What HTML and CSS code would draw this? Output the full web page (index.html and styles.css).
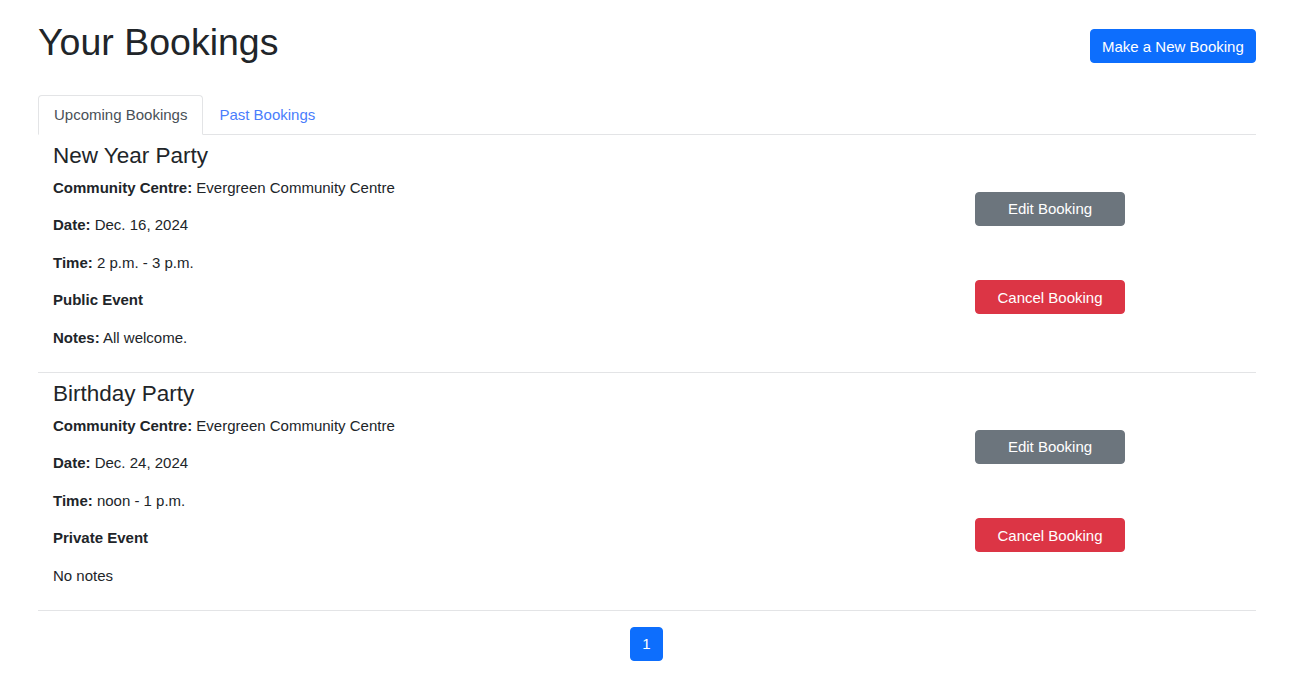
FILE: index.html
```html
<!DOCTYPE html>
<html lang="en">
<head>
<meta charset="utf-8">
<title>Your Bookings</title>
<link rel="stylesheet" href="styles.css">
</head>
<body>
<div class="page">
  <header class="page-header">
    <h1 class="page-title">Your Bookings</h1>
    <a class="btn btn-primary" href="#">Make a New Booking</a>
  </header>

  <ul class="tabs">
    <li class="tab-item"><a class="tab-link active" href="#">Upcoming Bookings</a></li>
    <li class="tab-item"><a class="tab-link" href="#">Past Bookings</a></li>
  </ul>

  <div class="bookings">
    <div class="booking">
      <div class="booking-info">
        <h4 class="booking-title">New Year Party</h4>
        <p><strong>Community Centre:</strong> Evergreen Community Centre</p>
        <p><strong>Date:</strong> Dec. 16, 2024</p>
        <p><strong>Time:</strong> 2 p.m. - 3 p.m.</p>
        <p><strong>Public Event</strong></p>
        <p><strong>Notes:</strong> All welcome.</p>
      </div>
      <div class="booking-actions">
        <a class="btn btn-secondary btn-block" href="#">Edit Booking</a>
        <a class="btn btn-danger btn-block" href="#">Cancel Booking</a>
      </div>
    </div>

    <div class="booking">
      <div class="booking-info">
        <h4 class="booking-title">Birthday Party</h4>
        <p><strong>Community Centre:</strong> Evergreen Community Centre</p>
        <p><strong>Date:</strong> Dec. 24, 2024</p>
        <p><strong>Time:</strong> noon - 1 p.m.</p>
        <p><strong>Private Event</strong></p>
        <p>No notes</p>
      </div>
      <div class="booking-actions">
        <a class="btn btn-secondary btn-block" href="#">Edit Booking</a>
        <a class="btn btn-danger btn-block" href="#">Cancel Booking</a>
      </div>
    </div>
  </div>

  <nav class="pagination">
    <span class="page-link active">1</span>
  </nav>
</div>
</body>
</html>
```

FILE: styles.css
```css
* { box-sizing: border-box; }

html, body {
  margin: 0;
  padding: 0;
  background: #fff;
}

body {
  font-family: "Liberation Sans", Arial, sans-serif;
  font-size: 15px;
  line-height: 1.5;
  color: #212529;
}

.page {
  width: 1218px;
  margin-left: 38px;
  padding-top: 20px;
}

.page-header {
  display: flex;
  justify-content: space-between;
  align-items: flex-start;
  margin-bottom: 30px;
}

.page-title {
  margin: 0;
  font-size: 37.5px;
  line-height: 1.2;
  font-weight: 400;
  color: #212529;
}

.btn {
  display: inline-block;
  padding: 5.6px 11.25px;
  font-size: 15px;
  line-height: 21px;
  color: #fff;
  text-align: center;
  text-decoration: none;
  border: 1px solid transparent;
  border-radius: 4px;
  white-space: nowrap;
}

.btn-primary {
  background: #0d6efd;
  border-color: #0d6efd;
  margin-top: 9px;
}

.btn-secondary {
  background: #6c757d;
  border-color: #6c757d;
}

.btn-danger {
  background: #dc3545;
  border-color: #dc3545;
}

.btn-block {
  width: 150px;
}

.tabs {
  display: flex;
  list-style: none;
  margin: 0;
  padding: 0;
  border-bottom: 1px solid #e3e4e6;
}

.tab-item {
  margin-bottom: -1px;
}

.tab-link {
  display: block;
  padding: 7.5px 15px;
  border: 1px solid transparent;
  border-top-left-radius: 4px;
  border-top-right-radius: 4px;
  color: #4a7dfc;
  text-decoration: none;
  line-height: 22.5px;
}

.tab-link.active {
  color: #495057;
  background: #fff;
  border-color: #e3e4e6 #e3e4e6 #fff;
}

.bookings {
  display: flex;
  flex-direction: column;
}

.booking {
  display: flex;
  align-items: center;
  padding: 7.5px 15px;
  border-bottom: 1px solid #e3e4e6;
}

.booking-info {
  flex: 1;
}

.booking-title {
  margin: 0 0 7.5px;
  font-size: 22.5px;
  line-height: 1.2;
  font-weight: 400;
}

.booking-info p {
  margin: 0 0 15px;
}

.booking-info strong {
  font-weight: 700;
}

.booking-actions {
  display: flex;
  flex-direction: column;
  gap: 54px;
  margin-right: 116px;
}

.pagination {
  display: flex;
  justify-content: center;
  margin-top: 16px;
}

.page-link {
  display: block;
  padding: 5.6px 11.25px;
  line-height: 21px;
  min-width: 33px;
  text-align: center;
  border: 1px solid #dee2e6;
  border-radius: 4px;
  font-size: 15px;
}

.page-link.active {
  background: #0d6efd;
  border-color: #0d6efd;
  color: #fff;
  margin-left: -1px;
}
```
